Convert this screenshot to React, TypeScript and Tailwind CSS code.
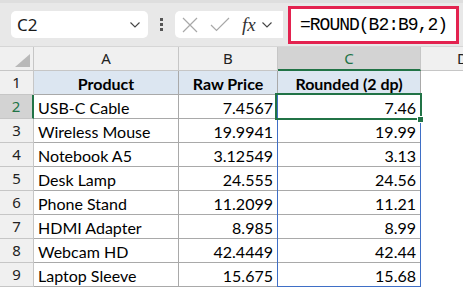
import React from "react";

const rows: [string, string, string][] = [
  ["USB-C Cable", "7.4567", "7.46"],
  ["Wireless Mouse", "19.9941", "19.99"],
  ["Notebook A5", "3.12549", "3.13"],
  ["Desk Lamp", "24.555", "24.56"],
  ["Phone Stand", "11.2099", "11.21"],
  ["HDMI Adapter", "8.985", "8.99"],
  ["Webcam HD", "42.4449", "42.44"],
  ["Laptop Sleeve", "15.675", "15.68"],
];

const ui = { fontFamily: '"Noto Sans", "Open Sans", sans-serif' };
const cellFont = { fontFamily: 'Lato, "Open Sans", sans-serif' };

function Chevron({ className }: { className?: string }) {
  return (
    <svg className={className} width="10" height="6" viewBox="0 0 10 6" fill="none">
      <path d="M0.5 0.5 L5 5 L9.5 0.5" stroke="#444" strokeWidth="1.1" />
    </svg>
  );
}

export default function App() {
  return (
    <div className="w-[463px] h-[288px] overflow-hidden bg-white relative" style={ui}>
      {/* Toolbar */}
      <div className="h-[47px] bg-[#e8e8e8] border-b border-[#d6d6d6] flex flex-col">
        <div className="h-[3px] bg-[#dedede]" />
        <div className="flex-1 flex items-center pl-[11px]">
          <div className="w-[137px] h-[27px] bg-white rounded-[5px] flex items-center pl-[6px] pr-[8px] justify-between">
            <span className="text-[17px] text-[#1a1a1a] leading-none">C2</span>
            <Chevron />
          </div>
          <div className="w-[27px] flex flex-col items-center gap-[2px]">
            <div className="w-[3px] h-[3px] bg-[#555]" />
            <div className="w-[3px] h-[3px] bg-[#555]" />
            <div className="w-[3px] h-[3px] bg-[#555]" />
          </div>
          <div className="w-[108px] h-[27px] bg-white rounded-l-[5px] flex items-center pl-[7px]">
            <svg width="16" height="16" viewBox="0 0 16 16">
              <path d="M1 1 L15 15 M15 1 L1 15" stroke="#a8a8a8" strokeWidth="1.2" />
            </svg>
            <svg className="ml-[12px]" width="20" height="15" viewBox="0 0 20 15">
              <path d="M1 8 L6.5 13.5 L19 1" stroke="#a8a8a8" strokeWidth="1.2" fill="none" />
            </svg>
            <span
              className="ml-[12px] text-[19px] italic leading-none text-[#333]"
              style={{ fontFamily: '"Liberation Serif", serif' }}
            >
              fx
            </span>
            <Chevron className="ml-[6px]" />
          </div>
          <div className="ml-[5px] w-[171px] h-[38px] border-[3px] border-[#e3224f] bg-white flex items-center pl-[9px]">
            <span
              className="text-[18px] leading-none text-black tracking-[-1px]"
              style={{ fontFamily: '"Liberation Mono", monospace' }}
            >
              =ROUND(B2:B9,2)
            </span>
          </div>
        </div>
      </div>

      {/* Grid */}
      <div className="relative">
        <div className="grid grid-cols-[34px_145px_99px_143px_1fr]">
          {/* header row */}
          <div className="h-[24px] bg-[#f0f0f0] border-r border-b border-[#c6c6c6] flex items-end justify-end pr-[3px] pb-[3px]">
            <svg width="15" height="13" viewBox="0 0 15 13">
              <polygon points="15,0 15,13 0,13" fill="#b9b9b9" />
            </svg>
          </div>
          <div className="h-[24px] bg-[#f0f0f0] border-r border-b border-[#c6c6c6] flex items-center justify-center text-[15px] text-[#222]">A</div>
          <div className="h-[24px] bg-[#f0f0f0] border-r border-b border-[#c6c6c6] flex items-center justify-center text-[15px] text-[#222]">B</div>
          <div className="h-[24px] bg-[#d3d3d3] border-r border-[#c6c6c6] border-b-2 border-b-[#217346] flex items-center justify-center text-[15px] text-[#217346] pt-[1px]">C</div>
          <div className="h-[24px] bg-[#f0f0f0] border-b border-[#c6c6c6] flex items-center pl-[36px] text-[15px] text-[#222]">D</div>

          {/* row 1 */}
          <div className="h-[24px] bg-[#f0f0f0] border-r border-b border-[#c6c6c6] flex items-center justify-center text-[15px] text-[#222]">1</div>
          <div className="h-[24px] bg-[#dce6f1] border-r border-b border-[#a9a9a9] flex items-center justify-center text-[16px] font-bold text-black pt-[2px]" style={cellFont}>Product</div>
          <div className="h-[24px] bg-[#dce6f1] border-r border-b border-[#a9a9a9] flex items-center justify-center text-[16px] font-bold text-black pt-[2px]" style={cellFont}>Raw Price</div>
          <div className="h-[24px] bg-[#dce6f1] border-r border-b border-[#a9a9a9] flex items-center justify-center text-[16px] font-bold text-black pt-[2px]" style={cellFont}>Rounded (2 dp)</div>
          <div className="h-[24px] bg-white" />

          {rows.map(([name, raw, rounded], i) => {
            const selected = i === 0;
            return (
              <React.Fragment key={name}>
                <div
                  className={
                    selected
                      ? "h-[24px] bg-[#d3d3d3] border-b border-[#c6c6c6] border-r-2 border-r-[#217346] flex items-center justify-center text-[15px] text-[#217346]"
                      : "h-[24px] bg-[#f0f0f0] border-r border-b border-[#c6c6c6] flex items-center justify-center text-[15px] text-[#222]"
                  }
                >
                  {i + 2}
                </div>
                <div className="h-[24px] border-r border-b border-[#a9a9a9] flex items-center pl-[4px] text-[16px] text-black pt-[2px]" style={cellFont}>{name}</div>
                <div className="h-[24px] border-r border-b border-[#a9a9a9] flex items-center justify-end pr-[4px] text-[16px] text-black pt-[2px]" style={cellFont}>{raw}</div>
                <div className="h-[24px] border-r border-b border-[#a9a9a9] flex items-center justify-end pr-[4px] text-[16px] text-black pt-[2px]" style={cellFont}>{rounded}</div>
                <div className="h-[24px] bg-white" />
              </React.Fragment>
            );
          })}
        </div>

        {/* selection overlays */}
        <div className="absolute left-[277px] top-[47px] w-[144px] h-[193px] border border-[#3f6fc6] pointer-events-none" />
        <div className="absolute left-[275px] top-[46px] w-[147px] h-[27px] border-2 border-[#217346] pointer-events-none" />
        <div className="absolute left-[417px] top-[69px] w-[7px] h-[7px] bg-[#217346] border border-white pointer-events-none" />
      </div>
    </div>
  );
}
